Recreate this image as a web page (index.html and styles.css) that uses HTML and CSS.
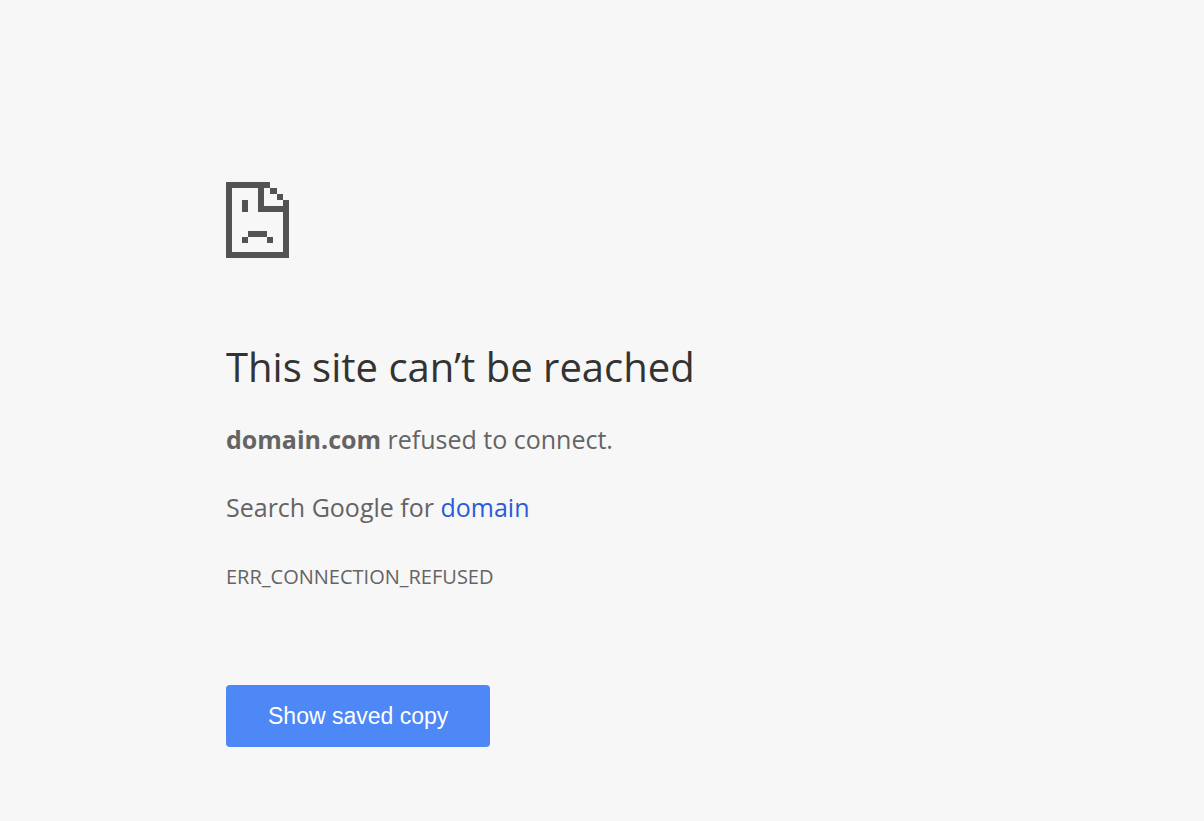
FILE: index.html
```html
<!DOCTYPE html>
<html lang="en">
<head>
<meta charset="utf-8">
<meta name="viewport" content="width=device-width, initial-scale=1">
<title>domain.com</title>
<link rel="stylesheet" href="styles.css">
</head>
<body>
<main class="error-page">
  <svg class="error-icon" viewBox="0 0 63 76" aria-hidden="true" shape-rendering="crispEdges">
    <path d="M0 0H44V6H38V24H57V18H63V76H0ZM6 6V70H57V30H32V6Z" fill-rule="evenodd"/>
    <path d="M44 6H51V12H44ZM51 12H57V18H51ZM16 18H22V30H16ZM22 49H41V55H22ZM16 55H22V61H16ZM41 55H47V61H41Z"/>
  </svg>
  <h1 class="error-title">This site can’t be reached</h1>
  <p class="error-text"><strong>domain.com</strong> refused to connect.</p>
  <p class="error-text">Search Google for <a class="error-link" href="#">domain</a></p>
  <p class="error-code">ERR_CONNECTION_REFUSED</p>
  <button class="copy-button" type="button">Show saved copy</button>
</main>
</body>
</html>
```
FILE: styles.css
```css
body {
  margin: 0;
  background: #f7f7f7;
  color: #646464;
  font-family: "Open Sans", "Noto Sans", sans-serif;
}

.error-page {
  box-sizing: border-box;
  max-width: 800px;
  margin: 0 auto;
  padding: 182px 24px 72px;
}

.error-icon {
  display: block;
  width: 63px;
  height: 76px;
  fill: #535353;
}

.error-title {
  margin: 85px 0 30px;
  color: #333;
  font-size: 40px;
  font-weight: 400;
  line-height: 48px;
}

.error-text {
  margin: 0 0 32px;
  font-size: 25px;
  line-height: 36px;
}

.error-link {
  color: #2a5bd7;
  text-decoration: none;
}

.error-code {
  margin: 0;
  font-size: 20px;
  line-height: 40px;
}

.copy-button {
  margin-top: 88px;
  padding: 16px 42px;
  border: 0;
  border-radius: 4px;
  background: #4e87f6;
  color: #fff;
  font-family: "Liberation Sans", Arial, sans-serif;
  font-size: 23px;
  line-height: 30px;
  cursor: pointer;
}
```
